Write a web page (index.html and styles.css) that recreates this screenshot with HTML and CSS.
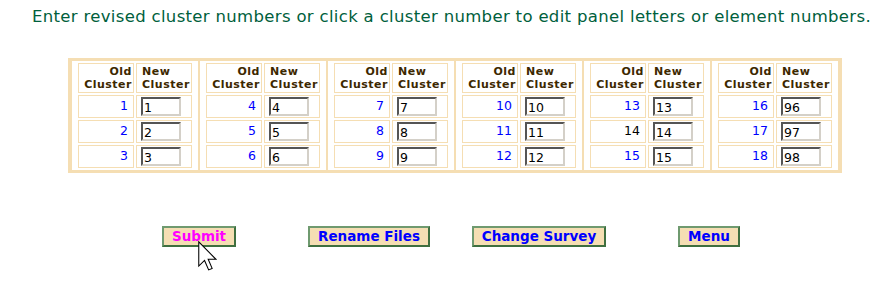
FILE: index.html
```html
<!DOCTYPE html>
<html lang="en">
<head>
    <meta charset="UTF-8">
    <title>Edit Clusters</title>
    <link rel="stylesheet" href="styles.css">
</head>
<body>

    <p class="intro">Enter revised cluster numbers or click a cluster number to edit panel letters or element numbers.</p>

    <form class="editform">

        <table class="clusters">
            <tr>
                <td>
                    <table class="group">
                        <tr><th class="old">Old<br>Cluster</th><th class="new">New<br>Cluster</th></tr>
                        <tr><td class="num"><a href="#">1</a></td><td class="box"><input type="text" value="1"></td></tr>
                        <tr><td class="num"><a href="#">2</a></td><td class="box"><input type="text" value="2"></td></tr>
                        <tr><td class="num"><a href="#">3</a></td><td class="box"><input type="text" value="3"></td></tr>
                    </table>
                </td>
                <td>
                    <table class="group">
                        <tr><th class="old">Old<br>Cluster</th><th class="new">New<br>Cluster</th></tr>
                        <tr><td class="num"><a href="#">4</a></td><td class="box"><input type="text" value="4"></td></tr>
                        <tr><td class="num"><a href="#">5</a></td><td class="box"><input type="text" value="5"></td></tr>
                        <tr><td class="num"><a href="#">6</a></td><td class="box"><input type="text" value="6"></td></tr>
                    </table>
                </td>
                <td>
                    <table class="group">
                        <tr><th class="old">Old<br>Cluster</th><th class="new">New<br>Cluster</th></tr>
                        <tr><td class="num"><a href="#">7</a></td><td class="box"><input type="text" value="7"></td></tr>
                        <tr><td class="num"><a href="#">8</a></td><td class="box"><input type="text" value="8"></td></tr>
                        <tr><td class="num"><a href="#">9</a></td><td class="box"><input type="text" value="9"></td></tr>
                    </table>
                </td>
                <td>
                    <table class="group">
                        <tr><th class="old">Old<br>Cluster</th><th class="new">New<br>Cluster</th></tr>
                        <tr><td class="num"><a href="#">10</a></td><td class="box"><input type="text" value="10"></td></tr>
                        <tr><td class="num"><a href="#">11</a></td><td class="box"><input type="text" value="11"></td></tr>
                        <tr><td class="num"><a href="#">12</a></td><td class="box"><input type="text" value="12"></td></tr>
                    </table>
                </td>
                <td>
                    <table class="group">
                        <tr><th class="old">Old<br>Cluster</th><th class="new">New<br>Cluster</th></tr>
                        <tr><td class="num"><a href="#">13</a></td><td class="box"><input type="text" value="13"></td></tr>
                        <tr><td class="num">14</td><td class="box"><input type="text" value="14"></td></tr>
                        <tr><td class="num"><a href="#">15</a></td><td class="box"><input type="text" value="15"></td></tr>
                    </table>
                </td>
                <td>
                    <table class="group">
                        <tr><th class="old">Old<br>Cluster</th><th class="new">New<br>Cluster</th></tr>
                        <tr><td class="num"><a href="#">16</a></td><td class="box"><input type="text" value="96"></td></tr>
                        <tr><td class="num"><a href="#">17</a></td><td class="box"><input type="text" value="97"></td></tr>
                        <tr><td class="num"><a href="#">18</a></td><td class="box"><input type="text" value="98"></td></tr>
                    </table>
                </td>
            </tr>
        </table>

        <div class="actions">
            <div class="slot">
                <button type="button" class="btn hover">Submit</button>
                <!-- mouse pointer sitting on Submit -->
                <svg class="pointer" width="19" height="30" viewBox="0 0 25 39.4">
                    <path d="M1 1 L1 33 L8.6 25.6 L14 38 L18.6 36 L13.4 24 L23.6 24 Z" fill="#ffffff" stroke="#000000" stroke-width="1.4"/>
                </svg>
            </div>
            <div class="slot"><button type="button" class="btn">Rename Files</button></div>
            <div class="slot"><button type="button" class="btn">Change Survey</button></div>
            <div class="slot"><button type="button" class="btn">Menu</button></div>
        </div>

    </form>

</body>
</html>
```

FILE: styles.css
```css
/*初始化*/
body{
    margin: 0;
    padding-bottom: 32px;
    background: #fff;
    font-family: "DejaVu Sans", Verdana, sans-serif;
}

/*1.顶部说明文字*/
.intro{
    margin: 7px 0 0;
    padding-left: 32px;
    font-size: 16.5px;
    letter-spacing: 0.33px;
    line-height: 19px;
    color: #00603c;
    white-space: nowrap;
}

/*2.外层表格*/
.clusters{
    margin: 32px 0 0 68px;
    border: 3px solid #f5deb3;
    border-spacing: 0;
}

.clusters > tbody > tr > td{
    border: 1px solid #f5deb3;
    border-top: 0;
    border-bottom: 0;
    padding: 0 4px;
}

/*3.每一组的小表格*/
.group{
    border-spacing: 2px;
}

.group th,
.group td{
    width: 56px;
    box-sizing: border-box;
    border: 1px solid #f5deb3;
    padding: 0;
}

.group th{
    height: 30px;
    font-size: 11px;
    line-height: 13px;
    letter-spacing: 0.5px;
    font-weight: bold;
    color: #3d2800;
}

.group th.old{
    text-align: right;
    padding-right: 1px;
}

.group th.new{
    text-align: left;
    padding-left: 5px;
}

.group td{
    height: 23px;
    font-size: 12.5px;
}

.group td.num{
    text-align: right;
    padding-right: 5px;
    vertical-align: top;
    padding-top: 2px;
}

.group td.num a{
    color: #0000ff;
    text-decoration: none;
}

.group td.box{
    padding: 1px 0 0 4px;
    vertical-align: top;
}

.group input{
    display: block;
    width: 40px;
    height: 19px;
    box-sizing: border-box;
    margin: 0;
    padding: 1px 0 0 1px;
    border: 2px solid;
    border-color: #555 #d4d0c8 #d4d0c8 #555;
    font-family: "DejaVu Sans", Verdana, sans-serif;
    font-size: 12.5px;
    color: #000;
    background: #fff;
}

/*4.底部按钮*/
.actions{
    display: flex;
    margin: 53px 0 0 114px;
}

.slot{
    width: 170px;
    display: flex;
    justify-content: center;
    position: relative;
}

.btn{
    height: 21px;
    box-sizing: border-box;
    padding: 0 8px;
    margin: 0;
    background: #f5deb3;
    border: 2px solid;
    border-color: #6f9a6f #3f6f3f #3f6f3f #6f9a6f;
    font-family: "DejaVu Sans", Verdana, sans-serif;
    font-size: 13.5px;
    font-weight: bold;
    line-height: 15px;
    color: #0000ff;
    cursor: pointer;
}

.btn.hover{
    color: #ff00ff;
}

/*5.鼠标指针*/
.pointer{
    position: absolute;
    left: 84px;
    top: 15px;
    z-index: 5;
}
```
